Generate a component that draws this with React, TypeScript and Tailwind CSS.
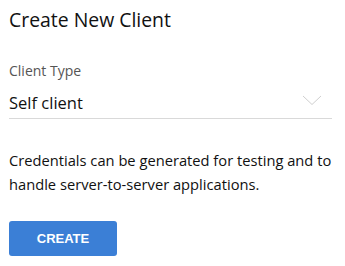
import React from "react";

export default function App() {
  return (
    <div className="w-[345px] h-[266px] bg-white px-[9px] pt-[8px] text-[#1a1a1a]" style={{ fontFamily: '"Open Sans", "Noto Sans", sans-serif' }}>
      <h1 className="text-[19.4px] leading-[24px] font-normal text-[#111]">Create New Client</h1>
      <div className="mt-[31px] text-[14px] leading-[16px] text-[#555]">Client Type</div>
      <div className="mt-[14px] w-[323px] flex items-center justify-between border-b border-[#d9d9d9] pb-[5px]">
        <span className="text-[16.5px] leading-[20px] text-[#111]">Self client</span>
        <svg width="20" height="11" viewBox="0 0 20 11" className="mr-[10px] -mt-[6px]">
          <path d="M1 1 L10 9.5 L19 1" fill="none" stroke="#cfcfcf" strokeWidth="1" />
        </svg>
      </div>
      <p className="mt-[29px] text-[14.7px] leading-[24px] text-[#111] w-[330px]">
        Credentials can be generated for testing and to handle server-to-server applications.
      </p>
      <button className="mt-[25px] w-[108px] h-[35px] rounded-[3px] bg-[#3b7fd6] text-white text-[13px] font-bold" style={{ fontFamily: '"Liberation Sans", Arial, sans-serif' }}>
        CREATE
      </button>
    </div>
  );
}
